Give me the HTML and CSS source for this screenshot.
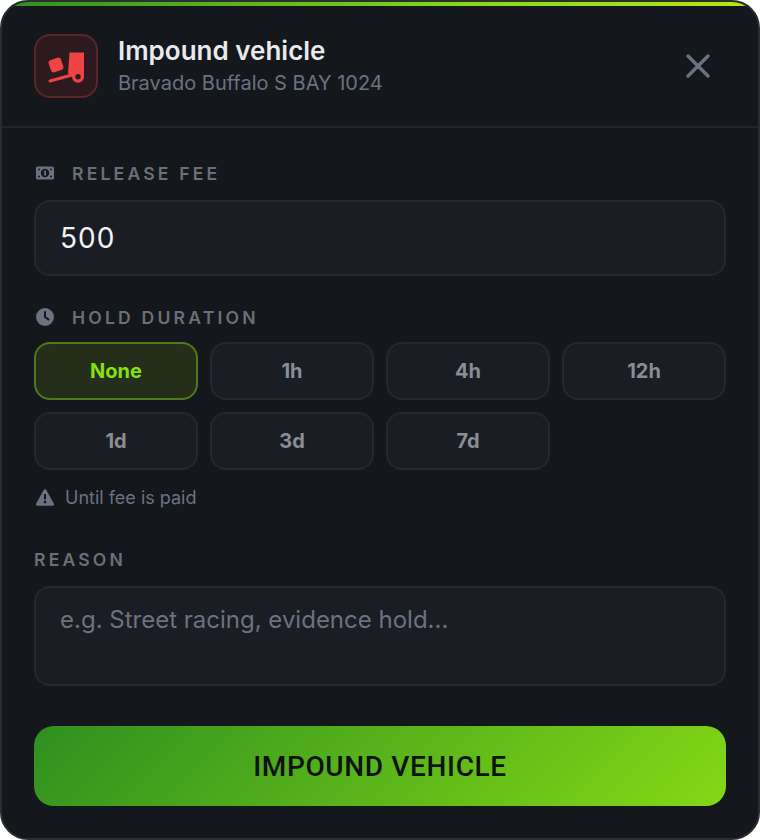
FILE: index.html
```html
<!DOCTYPE html>
<html lang="en">
<head>
    <meta charset="UTF-8">
    <title>Impound vehicle</title>
    <link rel="stylesheet" href="styles.css">
</head>
<body>
    <div class="modal">
        <div class="modal-strip"></div>
        <div class="modal-header">
            <div class="header-icon">
                <svg width="36" height="36" viewBox="0 0 36 36">
                    <rect x="1.500" y="10.500" width="13" height="13" rx="3" transform="rotate(-18 8 17)" fill="#ef4444"/>
                    <path d="M21.500 4.500H36V30H26L20 25.500Z" fill="#ef4444"/>
                    <path d="M2 33L24 27" stroke="#ef4444" stroke-width="3" stroke-linecap="round"/>
                    <circle cx="30" cy="28.700" r="6" fill="#ef4444"/>
                    <circle cx="30" cy="28.700" r="2.700" fill="#2d1a1f"/>
                </svg>
            </div>
            <div class="header-text">
                <div class="header-title">Impound vehicle</div>
                <div class="header-sub">Bravado Buffalo S BAY 1024</div>
            </div>
            <svg class="close-icon" width="28" height="28" viewBox="0 0 28 28">
                <path d="M4 4L24 24M24 4L4 24" stroke="#6b7280" stroke-width="3.500" stroke-linecap="round"/>
            </svg>
        </div>
        <div class="modal-body">
            <div class="field-label">
                <svg width="18" height="14" viewBox="0 0 18 14">
                    <path fill-rule="evenodd" fill="#6b7280" d="M1.500 .5H16.500A1.500 1.500 0 0 1 18 2V12A1.500 1.500 0 0 1 16.500 13.500H1.500A1.500 1.500 0 0 1 0 12V2A1.500 1.500 0 0 1 1.500 .5ZM9 2.800A4.200 4.200 0 1 0 9 11.200A4.200 4.200 0 1 0 9 2.800ZM3 2.500A1 1 0 1 0 3 4.500A1 1 0 1 0 3 2.500ZM15 2.500A1 1 0 1 0 15 4.500A1 1 0 1 0 15 2.500ZM3 9.500A1 1 0 1 0 3 11.500A1 1 0 1 0 3 9.500ZM15 9.500A1 1 0 1 0 15 11.500A1 1 0 1 0 15 9.500Z"/>
                    <rect x="8.200" y="4.500" width="1.800" height="5" fill="#6b7280"/>
                </svg>
                <span>RELEASE FEE</span>
            </div>
            <input class="text-input" type="text" value="500">

            <div class="field-label duration-label">
                <svg width="18" height="18" viewBox="0 0 18 18">
                    <circle cx="9" cy="9" r="9" fill="#6b7280"/>
                    <path d="M9 4V9L12.500 11.500" fill="none" stroke="#14171c" stroke-width="2" stroke-linecap="round"/>
                </svg>
                <span>HOLD DURATION</span>
            </div>
            <div class="duration-grid">
                <button class="duration active">None</button>
                <button class="duration">1h</button>
                <button class="duration">4h</button>
                <button class="duration">12h</button>
                <button class="duration">1d</button>
                <button class="duration">3d</button>
                <button class="duration">7d</button>
            </div>
            <div class="hint">
                <svg width="18" height="17" viewBox="0 0 18 17">
                    <path fill-rule="evenodd" fill="#6b7280" d="M7.700 1A1.500 1.500 0 0 1 10.300 1L17.800 14.500A1.500 1.500 0 0 1 16.500 16.800H1.500A1.500 1.500 0 0 1 .2 14.500ZM8 5V10.500H10V5ZM9 11.800A1.300 1.300 0 1 0 9 14.400A1.300 1.300 0 1 0 9 11.800Z"/>
                </svg>
                <span>Until fee is paid</span>
            </div>

            <div class="field-label reason-label"><span>REASON</span></div>
            <textarea class="text-area" placeholder="e.g. Street racing, evidence hold..."></textarea>

            <button class="submit">IMPOUND VEHICLE</button>
        </div>
    </div>
</body>
</html>
```

FILE: styles.css
```css
html, body {
    margin: 0;
    height: 100%;
    background-color: white;
}
.modal {
    position: relative;
    box-sizing: border-box;
    width: 760px;
    height: 840px;
    background-color: #14171c;
    border: 2px solid #2a2d34;
    border-radius: 28px;
    overflow: hidden;
    font-family: Inter, "Liberation Sans", sans-serif;
}
.modal-strip {
    position: absolute;
    top: 0;
    left: 0;
    right: 0;
    height: 4px;
    background: linear-gradient(90deg, #2f8f1f, #84d815 60%, #b8e80f);
}
.modal-header {
    display: flex;
    align-items: center;
    gap: 20px;
    height: 126px;
    padding: 4px 32px 0;
    box-sizing: border-box;
    border-bottom: 2px solid #22252c;
}
.header-icon {
    display: flex;
    align-items: center;
    justify-content: center;
    box-sizing: border-box;
    width: 64px;
    height: 64px;
    background-color: #2d1a1f;
    border: 2px solid #5c262b;
    border-radius: 16px;
}
.header-text {
    flex: 1;
    padding-top: 2px;
}
.header-title {
    font-size: 26px;
    font-weight: 600;
    line-height: 32px;
    color: #e8eaed;
}
.header-sub {
    font-size: 20px;
    line-height: 32px;
    color: #6b7280;
}
.close-icon {
    margin-right: 14px;
}
.modal-body {
    padding: 33px 32px 0;
}
.field-label {
    display: flex;
    align-items: center;
    gap: 18px;
    height: 24px;
    font-size: 17.600px;
    font-weight: 600;
    letter-spacing: 3.170px;
    color: #6b6f78;
}
.field-label svg {
    margin-left: 2px;
}
.text-input, .text-area {
    display: block;
    box-sizing: border-box;
    width: 692px;
    background-color: #1a1d24;
    border: 2px solid #25282f;
    border-radius: 16px;
    font-family: Inter, "Liberation Sans", sans-serif;
    outline: none;
}
.text-input {
    height: 76px;
    margin-top: 15px;
    padding: 0 24px;
    font-size: 28px;
    letter-spacing: 1px;
    color: #f1f3f5;
}
.duration-label {
    margin-top: 29px;
}
.duration-grid {
    display: grid;
    grid-template-columns: repeat(4, 164px);
    gap: 12px;
    margin-top: 13px;
}
.duration {
    height: 58px;
    background-color: #1a1d24;
    border: 2px solid #25282f;
    border-radius: 16px;
    font-family: Inter, "Liberation Sans", sans-serif;
    font-size: 20px;
    font-weight: 700;
    color: #8a8d93;
}
.duration.active {
    background-color: #252e1b;
    border-color: #4f7a1c;
    color: #84e010;
}
.hint {
    display: flex;
    align-items: center;
    gap: 11px;
    height: 24px;
    margin-top: 15px;
    padding-left: 2px;
    font-size: 18px;
    color: #6b7280;
}
.reason-label {
    margin-top: 38px;
}
.text-area {
    height: 100px;
    margin-top: 15px;
    padding: 17px 24px;
    font-size: 24px;
    resize: none;
}
.text-area::placeholder {
    color: #6b7280;
}
.submit {
    display: block;
    width: 692px;
    height: 80px;
    margin-top: 40px;
    background: linear-gradient(135deg, #2f8f1f, #84d815);
    border: none;
    border-radius: 20px;
    font-family: Roboto, "Liberation Sans", sans-serif;
    font-size: 28px;
    font-weight: 500;
    letter-spacing: .65px;
    color: #0d1210;
}
```
